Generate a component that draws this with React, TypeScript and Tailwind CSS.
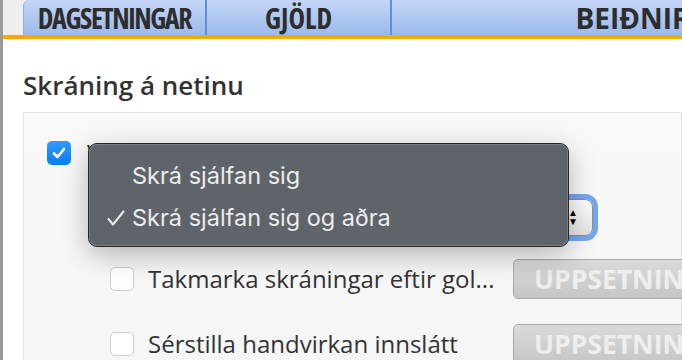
const Tab = ({ label, cls, first }: { label: string; cls: string; first?: boolean }) => {
  return (
    <div
      className={`flex items-center justify-center h-full bg-gradient-to-b from-[#c3d6f7] to-[#9cbaea] border-r-2 border-[#5b8fe0] shrink-0 ${cls} ${
        first ? "rounded-tl-[6px] border-l border-l-[#8fb2ea]" : ""
      }`}
    >
      {label}
    </div>
  );
};

const tabText =
  "font-['Open_Sans',sans-serif] font-bold text-[28px] text-[#2d2d2d] leading-none";

const Check = ({ checked }: { checked?: boolean }) => {
  if (checked) {
    return (
      <div className="w-[24px] h-[24px] rounded-[5px] bg-gradient-to-b from-[#2f9bff] to-[#0a7cf5] flex items-center justify-center shrink-0">
        <svg width="16" height="16" viewBox="0 0 16 16" fill="none">
          <path d="M3 8.5 L6.5 12 L13 4" stroke="white" strokeWidth="2.6" strokeLinecap="round" strokeLinejoin="round" />
        </svg>
      </div>
    );
  }
  return <div className="w-[24px] h-[24px] rounded-[5px] bg-white border border-[#cccccc] shrink-0" />;
};

const SetupButton = () => {
  return (
    <div className="h-[40px] w-[200px] rounded-[5px] border border-[#aaaaaa] bg-gradient-to-b from-[#dadada] to-[#c6c6c6] flex items-center pl-[20px] shrink-0">
      <span className="font-['Open_Sans',sans-serif] font-bold text-[26.5px] text-[#eeeeee] leading-none whitespace-nowrap">
        UPPSETNING
      </span>
    </div>
  );
};

export default function App() {
  return (
    <div className="w-[682px] h-[360px] overflow-hidden relative bg-white border-l-[3px] border-[#9a9a9a] font-['Open_Sans',sans-serif]">
      <div className="h-[39px] bg-[#eeeeee] border-b-4 border-[#f8a800] pl-[20px] flex items-end">
        <div className={`flex h-[35px] ${tabText}`}>
          <Tab label="DAGSETNINGAR" cls="w-[184px] [font-stretch:75%] tracking-[-1.4px]" first />
          <Tab label="GJÖLD" cls="w-[185px] [font-stretch:75%]" />
          <Tab label="BEIÐNIR" cls="w-[484px]" />
        </div>
      </div>
      <div className="pl-[20px]">
        <h2 className="text-[26px] font-semibold text-[#333333] mt-[30px] leading-[32px] h-[43px]">
          Skráning á netinu
        </h2>
        <div className="border border-[#e3e3e3] bg-gradient-to-b from-[#f9f9f9] to-[#f5f5f5] pl-[23px] pt-[27px] h-[300px]">
          <div className="flex items-center gap-[16px] h-[26px]">
            <Check checked />
            <span className="text-[24px] text-[#333333]">Virkja skráningu á netinu</span>
          </div>
          <div className="flex items-center h-[38px] mt-[32px] pl-[63px]">
            <span className="text-[24px] text-[#333333] w-[191px] whitespace-nowrap overflow-hidden shrink-0">Skráningarmáti</span>
            <div className="rounded-[8px] ring-[5px] ring-[#72a6f0] w-[292px] h-[37px] border border-[#8f8f8f] bg-gradient-to-b from-white to-[#e4e4e4] flex items-center justify-end pr-[14px] shrink-0">
              <div className="flex flex-col items-center text-[10px] leading-[9px] text-black">
                <span>▲</span>
                <span>▼</span>
              </div>
            </div>
          </div>
          <div className="flex items-center h-[40px] mt-[23px] pl-[63px]">
            <Check />
            <span className="text-[24px] text-[#333333] ml-[14px] w-[365px] whitespace-nowrap shrink-0">
              Takmarka skráningar eftir gol...
            </span>
            <SetupButton />
          </div>
          <div className="flex items-center h-[40px] mt-[25px] pl-[63px]">
            <Check />
            <span className="text-[24px] text-[#333333] ml-[14px] w-[365px] whitespace-nowrap shrink-0">
              Sérstilla handvirkan innslátt
            </span>
            <SetupButton />
          </div>
        </div>
      </div>

      <div className="absolute left-[85px] top-[143px] w-[481px] h-[104px] rounded-[9px] bg-[#5f636a] border border-[#262626] shadow-[0_8px_28px_rgba(0,0,0,0.28)] font-['Inter',sans-serif] text-[#ececec] text-[23.5px]">
        <div className="absolute inset-0 rounded-[8px] border border-[#7a7e85]" />
        <div className="flex flex-col pt-[16px]">
          <div className="flex items-center h-[32px]">
            <span className="w-[43px]" />
            <span>Skrá sjálfan sig</span>
          </div>
          <div className="flex items-center h-[32px] mt-[10px]">
            <span className="w-[43px] pl-[18px] flex items-center">
              <svg width="18" height="16" viewBox="0 0 18 16" fill="none">
                <path d="M1.5 9 L6 14.5 L16.5 1.5" stroke="#ececec" strokeWidth="2" strokeLinecap="round" strokeLinejoin="round" />
              </svg>
            </span>
            <span>Skrá sjálfan sig og aðra</span>
          </div>
        </div>
      </div>
    </div>
  );
}
